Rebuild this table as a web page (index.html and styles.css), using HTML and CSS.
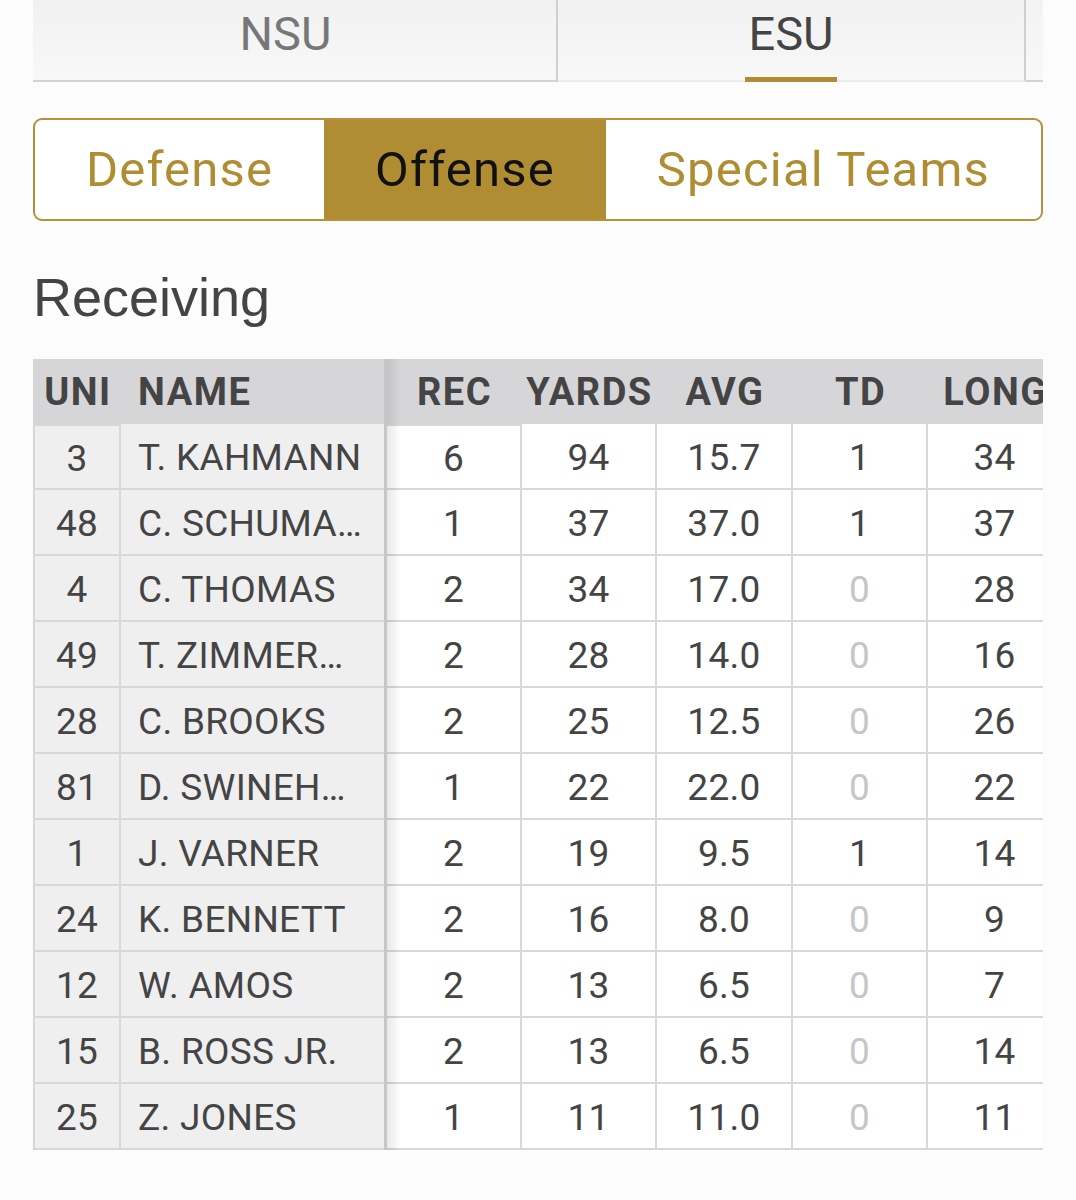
FILE: index.html
```html
<!DOCTYPE html>
<html lang="en">
<head>
<meta charset="utf-8">
<title>Receiving</title>
<link rel="stylesheet" href="styles.css">
</head>
<body>
<div class="page">
  <nav class="teams">
    <div class="team">NSU</div>
    <div class="team active"><span class="team-label">ESU</span></div>
    <div class="team stub"></div>
  </nav>

  <div class="segments">
    <div class="segment">Defense</div>
    <div class="segment on">Offense</div>
    <div class="segment">Special Teams</div>
  </div>

  <h2 class="section">Receiving</h2>

  <div class="stats">
    <div class="fixed">
      <div class="h uni">UNI</div><div class="h name">NAME</div>
      <div class="c uni">3</div><div class="c name">T. KAHMANN</div>
      <div class="c uni">48</div><div class="c name">C. SCHUMA…</div>
      <div class="c uni">4</div><div class="c name">C. THOMAS</div>
      <div class="c uni">49</div><div class="c name">T. ZIMMER…</div>
      <div class="c uni">28</div><div class="c name">C. BROOKS</div>
      <div class="c uni">81</div><div class="c name">D. SWINEH…</div>
      <div class="c uni">1</div><div class="c name">J. VARNER</div>
      <div class="c uni">24</div><div class="c name">K. BENNETT</div>
      <div class="c uni">12</div><div class="c name">W. AMOS</div>
      <div class="c uni">15</div><div class="c name">B. ROSS JR.</div>
      <div class="c uni">25</div><div class="c name">Z. JONES</div>
    </div>
    <div class="scroll">
      <div class="grid">
        <div class="h">REC</div><div class="h">YARDS</div><div class="h">AVG</div><div class="h">TD</div><div class="h">LONG</div>
        <div class="c">6</div><div class="c">94</div><div class="c">15.7</div><div class="c">1</div><div class="c">34</div>
        <div class="c">1</div><div class="c">37</div><div class="c">37.0</div><div class="c">1</div><div class="c">37</div>
        <div class="c">2</div><div class="c">34</div><div class="c">17.0</div><div class="c zero">0</div><div class="c">28</div>
        <div class="c">2</div><div class="c">28</div><div class="c">14.0</div><div class="c zero">0</div><div class="c">16</div>
        <div class="c">2</div><div class="c">25</div><div class="c">12.5</div><div class="c zero">0</div><div class="c">26</div>
        <div class="c">1</div><div class="c">22</div><div class="c">22.0</div><div class="c zero">0</div><div class="c">22</div>
        <div class="c">2</div><div class="c">19</div><div class="c">9.5</div><div class="c">1</div><div class="c">14</div>
        <div class="c">2</div><div class="c">16</div><div class="c">8.0</div><div class="c zero">0</div><div class="c">9</div>
        <div class="c">2</div><div class="c">13</div><div class="c">6.5</div><div class="c zero">0</div><div class="c">7</div>
        <div class="c">2</div><div class="c">13</div><div class="c">6.5</div><div class="c zero">0</div><div class="c">14</div>
        <div class="c">1</div><div class="c">11</div><div class="c">11.0</div><div class="c zero">0</div><div class="c">11</div>
      </div>
    </div>
  </div>
</div>
</body>
</html>
```

FILE: styles.css
```css
html, body {
  margin: 0;
  padding: 0;
  background: #fcfcfc;
}

.page {
  width: 1010px;
  margin-left: 33px;
  font-family: Roboto, "Liberation Sans", sans-serif;
  color: #444;
}

/* team tabs */
.teams {
  display: flex;
  height: 82px;
}

.team {
  box-sizing: border-box;
  height: 82px;
  border-right: 2px solid #cfcfcf;
  border-bottom: 2px solid #d2d2d2;
  background: linear-gradient(#f1f1f1, #f8f8f8);
  font-size: 47px;
  color: #777;
  display: flex;
  justify-content: center;
  padding-top: 8px;
  padding-right: 18px;
  width: 525px;
  line-height: 52px;
}

.team.active {
  width: 468px;
  padding-right: 0;
  border-bottom-color: #ececec;
  color: #444;
  align-items: flex-start;
}

.team-label {
  display: inline-block;
  position: relative;
  height: 72px;
}

.team-label::after {
  content: "";
  position: absolute;
  left: -3px;
  right: -3px;
  bottom: -2px;
  height: 5px;
  background: #b08d33;
}

.team.stub {
  width: 17px;
  border-right: none;
  padding: 0;
  background: linear-gradient(#f3f3f3, #f8f8f8);
}

/* segmented control */
.segments {
  display: flex;
  margin-top: 36px;
  height: 103px;
  box-sizing: border-box;
  border: 2px solid #b5923a;
  border-radius: 9px;
  overflow: hidden;
  background: #fff;
}

.segment {
  flex: 1 1 auto;
  display: flex;
  align-items: center;
  justify-content: center;
  font-size: 49px;
  letter-spacing: 1.2px;
  color: #b08d33;
}

.segment.on {
  background: #b08d33;
  color: #111;
}

/* section title */
.section {
  margin: 46px 0 0 0;
  font-family: "Liberation Sans", Arial, sans-serif;
  font-weight: normal;
  font-size: 54px;
  line-height: 60px;
  color: #444;
}

/* stats table */
.stats {
  display: flex;
  margin-top: 32px;
  overflow: hidden;
}

.fixed {
  flex: none;
  display: grid;
  grid-template-columns: 88px 263px;
  grid-template-rows: 65px repeat(11, 66px);
  background: #efeff0;
  border-right: 3px solid #c6c6c8;
}

.scroll {
  flex: none;
  width: 656px;
  overflow: hidden;
  position: relative;
  background: #fff;
}

.scroll::before {
  content: "";
  position: absolute;
  left: 0;
  top: 0;
  bottom: 0;
  width: 14px;
  background: linear-gradient(90deg, rgba(0,0,0,0.09), rgba(0,0,0,0));
  pointer-events: none;
}

.grid {
  display: grid;
  grid-template-columns: 135px 135px 136px 135px 135px;
  grid-template-rows: 65px repeat(11, 66px);
  width: 676px;
}

.h {
  background: #d6d6d8;
  font-weight: bold;
  font-size: 38px;
  color: #444;
  display: flex;
  align-items: center;
  justify-content: center;
  letter-spacing: 1.5px;
}

.fixed .h.name {
  justify-content: flex-start;
  padding-left: 17px;
}

.fixed .h.uni {
  padding-left: 2px;
}

.c {
  box-sizing: border-box;
  border-bottom: 2px solid #d8d8da;
  border-right: 2px solid #d8d8da;
  display: flex;
  align-items: center;
  justify-content: center;
  font-size: 37px;
  letter-spacing: 0.3px;
  color: #444;
  padding-top: 3px;
}

.c:first-child, .h + .c {
  border-top: 2px solid #d8d8da;
}

.fixed .c.uni {
  border-left: 2px solid #d6d6d8;
}

.fixed .c.name {
  justify-content: flex-start;
  padding-left: 17px;
  border-right: none;
  white-space: nowrap;
}

.c.zero {
  color: #c6c6c6;
}
```
